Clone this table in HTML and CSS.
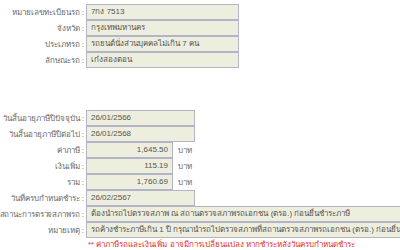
FILE: index.html
```html
<!DOCTYPE html>
<html lang="th">
<head>
<meta charset="utf-8">
<link rel="stylesheet" href="styles.css">
</head>
<body>
<div class="form">
  <section class="group group-top">
    <div class="row"><div class="label"><span>หมายเลขทะเบียนรถ :</span></div><div class="field field-lg">7กง 7513</div></div>
    <div class="row"><div class="label"><span>จังหวัด :</span></div><div class="field field-lg">กรุงเทพมหานคร</div></div>
    <div class="row"><div class="label"><span>ประเภทรถ :</span></div><div class="field field-lg">รถยนต์นั่งส่วนบุคคลไม่เกิน 7 คน</div></div>
    <div class="row"><div class="label"><span>ลักษณะรถ :</span></div><div class="field field-lg">เก๋งสองตอน</div></div>
  </section>
  <section class="group group-bottom">
    <div class="row"><div class="label"><span>วันสิ้นอายุภาษีปีปัจจุบัน :</span></div><div class="field field-md">26/01/2566</div></div>
    <div class="row"><div class="label"><span>วันสิ้นอายุภาษีปีต่อไป :</span></div><div class="field field-md">26/01/2568</div></div>
    <div class="row"><div class="label"><span>ค่าภาษี :</span></div><div class="field field-sm num">1,645.50</div><span class="unit">บาท</span></div>
    <div class="row"><div class="label"><span>เงินเพิ่ม :</span></div><div class="field field-sm num">115.19</div><span class="unit">บาท</span></div>
    <div class="row"><div class="label"><span>รวม :</span></div><div class="field field-sm num">1,760.69</div><span class="unit">บาท</span></div>
    <div class="row"><div class="label"><span>วันที่ครบกำหนดชำระ :</span></div><div class="field field-md">26/02/2567</div></div>
    <div class="row"><div class="label"><span class="tight">สถานะการตรวจสภาพรถ :</span></div><div class="field field-xl">ต้องนำรถไปตรวจสภาพ ณ สถานตรวจสภาพรถเอกชน (ตรอ.) ก่อนยื่นชำระภาษี</div></div>
    <div class="row"><div class="label"><span>หมายเหตุ :</span></div><div class="field field-xl">รถค้างชำระภาษีเกิน 1 ปี กรุณานำรถไปตรวจสภาพที่สถานตรวจสภาพรถเอกชน (ตรอ.) ก่อนยื่นชำระภาษี</div></div>
    <div class="row row-note"><div class="label"></div><div class="note">** ค่าภาษีรถและเงินเพิ่ม อาจมีการเปลี่ยนแปลง หากชำระหลังวันครบกำหนดชำระ</div></div>
  </section>
</div>
</body>
</html>
```
FILE: styles.css
```css
html, body {
  margin: 0;
  overflow: hidden;
  background: #ffffff;
}
body {
  font-family: "Liberation Sans", "DejaVu Sans", sans-serif;
  font-size: 8px;
  color: #666666;
}
.form {
  padding-top: 4px;
}
.group-bottom {
  margin-top: 42px;
}
.row {
  display: flex;
  align-items: center;
  height: 16px;
  white-space: nowrap;
}
.row-note {
  height: 12px;
}
.label {
  flex: none;
  width: 84px;
  padding-right: 2px;
  display: flex;
  justify-content: flex-end;
  color: #6a6a6a;
}
.tight {
  letter-spacing: -0.1px;
}
.field {
  flex: none;
  box-sizing: border-box;
  height: 16px;
  line-height: 14px;
  padding: 0 4px;
  border: 1px solid #b4b4c8;
  background: #eeeedf;
  color: #555555;
  overflow: hidden;
}
.field-lg { width: 153px; }
.field-md { width: 109px; }
.field-sm { width: 87px; }
.field-xl { width: 330px; }
.num { text-align: right; }
.unit {
  margin-left: 5px;
  color: #6a6a6a;
}
.note {
  padding-left: 2px;
  color: #e0302c;
}
```
